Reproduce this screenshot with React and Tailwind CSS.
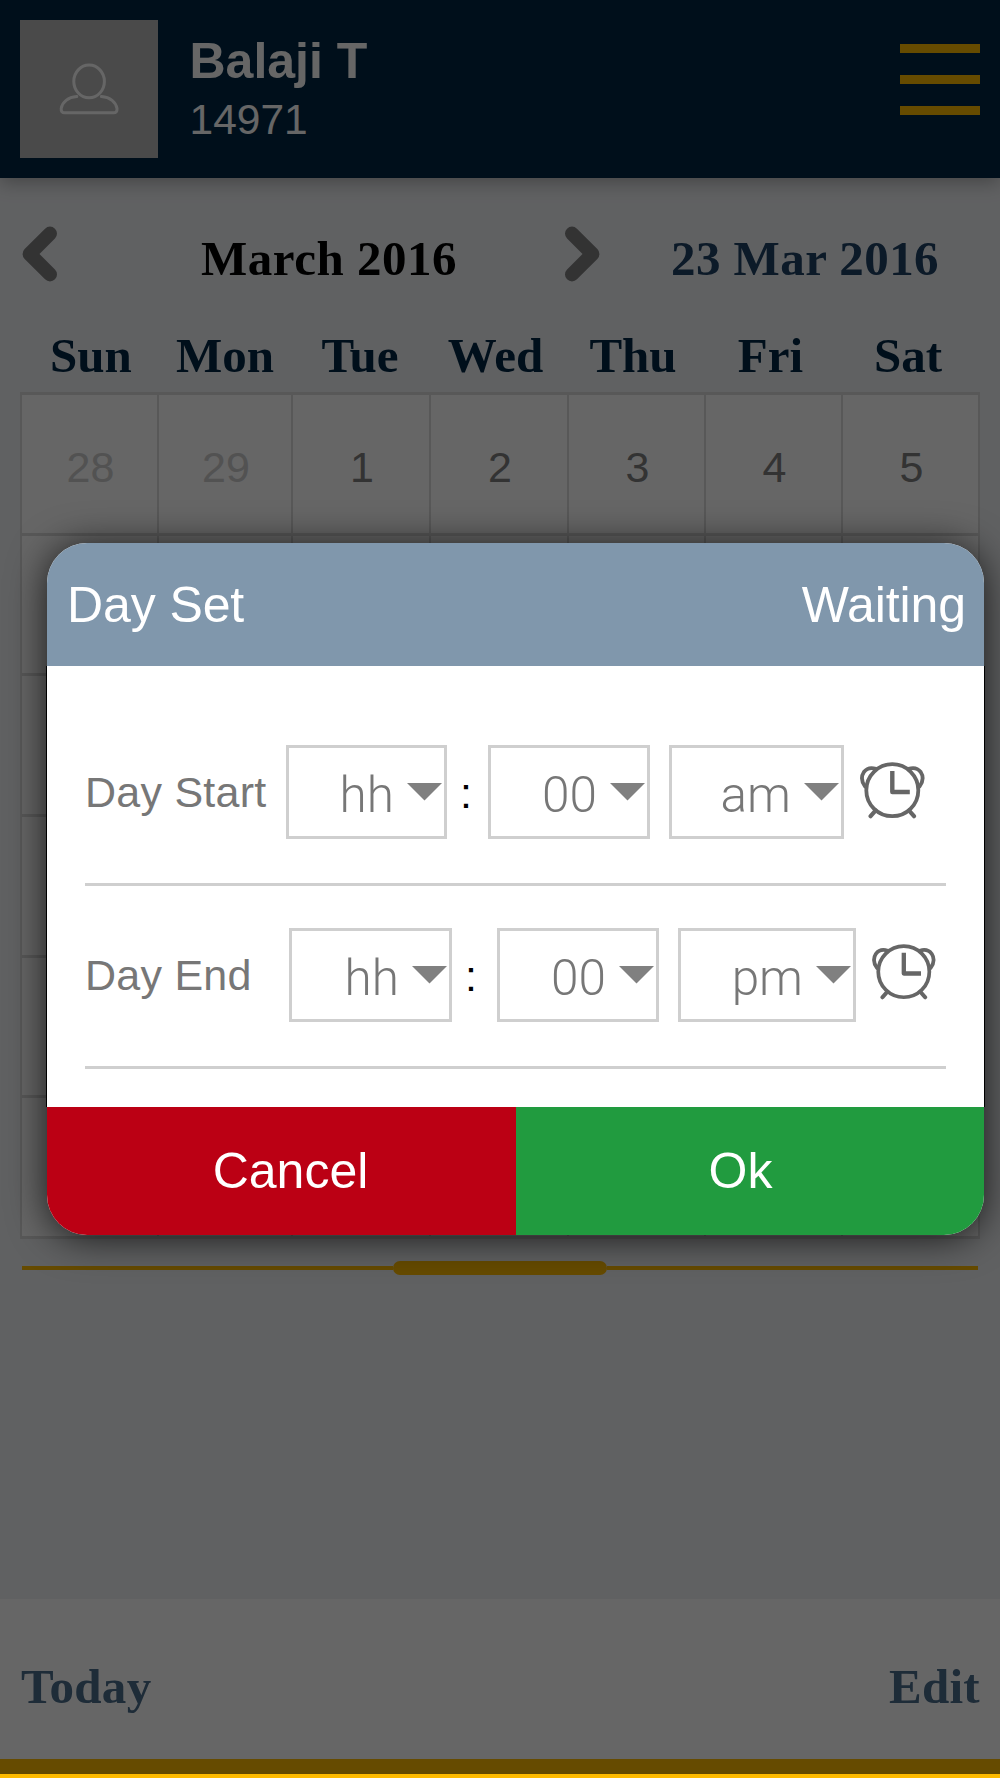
import React from "react";

const SANS = "font-['Liberation_Sans',Arial,sans-serif]";
const SERIF = "font-['Liberation_Serif','Times_New_Roman',serif]";

const WEEKDAYS = ["Sun", "Mon", "Tue", "Wed", "Thu", "Fri", "Sat"];
const FIRST_WEEK = ["28", "29", "1", "2", "3", "4", "5"];

function PersonIcon() {
  return (
    <svg className="h-[52px] w-[60px]" viewBox="0 0 60 52" fill="none" stroke="#fff" strokeWidth="3" strokeLinecap="round" strokeLinejoin="round">
      <ellipse cx="30.1" cy="18.4" rx="15.3" ry="16.3" />
      <path d="M17.8 33.6C9 34.2 3.3 39 2.2 45.5C1.9 48.3 3.3 49.8 5.6 49.8H54.6C56.9 49.8 58.3 48.3 58 45.5C56.9 39 51.2 34.2 42.4 33.6" />
    </svg>
  );
}

function Chevron({ right }) {
  return (
    <svg className="h-[56px] w-[36px] shrink-0" viewBox="0 0 36 56" fill="none" stroke="#808080" strokeWidth="14" strokeLinecap="round" strokeLinejoin="round">
      <path d={right ? "M8 7.6L28.4 28L8 48.4" : "M28 7.6L7.6 28L28 48.4"} />
    </svg>
  );
}

function AlarmIcon({ className }) {
  return (
    <svg className={className} viewBox="0 0 65 57" fill="none" stroke="#666" strokeWidth="3.8" strokeLinecap="round" strokeLinejoin="round">
      <circle cx="32.3" cy="28.2" r="26" />
      <path d="M16 6.8C11.5 5.4 6.6 6.4 3.9 10C1.2 14.2 1.6 19.7 5 24.4" />
      <path d="M48.6 6.8C53.1 5.4 58 6.4 60.7 10C63.4 14.2 63 19.7 59.6 24.4" />
      <path d="M15.5 48.6L10.6 54.2M49.1 48.6L54 54.2" strokeWidth="4.2" />
      <path d="M32.3 9V30H49.8" strokeWidth="4.4" strokeLinecap="butt" />
    </svg>
  );
}

function Select({ value, className }) {
  return (
    <div className={`flex h-[94px] shrink-0 items-center justify-end border-[3px] border-[#cfcfcf] pr-[2px] ${className}`}>
      <span className="mr-[13px] pt-[5px] font-['Roboto',sans-serif] text-[49.5px] leading-[60px] font-light text-[#777]">
        {value}
      </span>
      <svg className="h-[18px] w-[35px]" viewBox="0 0 35 18">
        <path d="M0 0H35L17.5 17.5Z" fill="#808080" />
      </svg>
    </div>
  );
}

export default function App() {
  return (
    <div className={`relative flex h-[1778px] w-[1000px] flex-col overflow-hidden bg-[#f0f2f5] ${SANS}`}>
      <header className="relative flex h-[178px] shrink-0 items-start bg-[#002644] px-5 pt-5 shadow-[0_4px_18px_rgba(0,0,0,0.3)]">
        <div className="flex h-[138px] w-[138px] items-center justify-center bg-[#b9b9b9]">
          <PersonIcon />
        </div>
        <div className="ml-[31.5px] flex-1 text-white">
          <div className="pt-[13px] text-[50px] leading-[56px] font-bold">Balaji T</div>
          <div className="text-[42.5px] leading-[62px]">14971</div>
        </div>
        <div className="mt-[24px] flex w-[80px] flex-col gap-[22px]">
          <span className="h-[9px] bg-[#ffbb00]" />
          <span className="h-[9px] bg-[#ffbb00]" />
          <span className="h-[9px] bg-[#ffbb00]" />
        </div>
      </header>

      <main className="flex h-[1421px] shrink-0 flex-col px-5">
        <div className={`flex h-[152px] items-center pl-[2px] text-[49px] font-bold ${SERIF}`}>
          <Chevron />
          <span className="w-[506px] pt-[10px] pl-[36px] text-center leading-[56px] tracking-[0.5px] text-black">March 2016</span>
          <Chevron right />
          <span className="ml-[71px] pt-[10px] leading-[56px] tracking-[0.45px] whitespace-nowrap text-[#1e4164]">23 Mar 2016</span>
        </div>

        <div className={`-mt-[2px] grid h-[64px] w-[958px] grid-cols-[134px_134px_136px_135px_140px_135px_140px] pl-1 ${SERIF}`}>
          {WEEKDAYS.map((d) => (
            <span key={d} className="text-center text-[49px] leading-[56px] font-bold text-[#002644]">{d}</span>
          ))}
        </div>

        <div className="grid h-[847px] w-[960px] shrink-0 grid-cols-[135px_132px_136px_136px_135px_135px_135px] grid-rows-6 gap-x-[2px] gap-y-[3px] bg-[#dcdcdc] px-[2px] py-[3px]">
          {Array.from({ length: 42 }, (_, i) => (
            <div key={i} className={`flex items-center justify-center bg-white pt-[7px] pl-[2px] text-[43px] leading-[50px] ${i < 2 ? "text-[#ccc]" : "text-[#808080]"}`}>
              {FIRST_WEEK[i]}
            </div>
          ))}
        </div>

        <div className="mt-[22px] ml-[2px] flex h-[14px] w-[956px] items-center">
          <span className="h-1 w-[371px] bg-[#ffbb00]" />
          <span className="h-[14px] w-[214px] rounded-full bg-[#ffbb00]" />
          <span className="h-1 flex-1 bg-[#ffbb00]" />
        </div>
      </main>

      <footer className={`flex h-[160px] shrink-0 items-center justify-between bg-white pr-5 pl-[21px] pt-[16px] text-[49px] leading-[56px] font-bold tracking-[0.3px] text-[#4d6e8c] ${SERIF}`}>
        <span>Today</span>
        <span>Edit</span>
      </footer>
      <div className="h-[19px] shrink-0 bg-[#ffbb00]" />

      <div className="absolute inset-x-0 top-0 h-[1774px] bg-black/60">
        <div className="absolute top-[543px] left-[47px] flex h-[692px] w-[937px] flex-col rounded-[40px] bg-white shadow-[0_3px_38px_rgba(0,0,0,0.75)]">
          <div className="flex h-[123px] shrink-0 items-center justify-between rounded-t-[40px] bg-[#8097ac] pr-[18px] pl-5 text-[50px] leading-[60px] text-white">
            <span className="tracking-[-0.1px]">Day Set</span>
            <span className="tracking-[-0.1px]">Waiting</span>
          </div>

          <div className="flex h-[441px] shrink-0 flex-col bg-white px-[38px] pt-[79px] text-[43px] leading-[50px] text-[#777] shadow-[-1px_0_0_#000,1px_0_0_#000]">
            <div className="flex h-[141px] items-start border-b-[3px] border-[#cfcfcf]">
              <span className="w-[201px] shrink-0 pt-[22px] tracking-[0.25px] whitespace-nowrap">Day Start</span>
              <Select value="hh" className="w-[161px]" />
              <span className="w-[41px] shrink-0 pt-[23px] pl-[13px] text-black">:</span>
              <Select value="00" className="w-[162px]" />
              <Select value="am" className="ml-[19px] w-[175px]" />
              <AlarmIcon className="mt-[17px] ml-4 h-[57px] w-[65px] shrink-0" />
            </div>
            <div className="flex h-[183px] items-start border-b-[3px] border-[#cfcfcf] pt-[42px]">
              <span className="w-[204px] shrink-0 pt-[22px] tracking-[0.25px] whitespace-nowrap">Day End</span>
              <Select value="hh" className="w-[163px]" />
              <span className="w-[45px] shrink-0 pt-[23px] pl-[13px] text-black">:</span>
              <Select value="00" className="w-[162px]" />
              <Select value="pm" className="ml-[19px] w-[178px]" />
              <AlarmIcon className="mt-[16px] ml-4 h-[56px] w-[64px] shrink-0" />
            </div>
          </div>

          <div className="flex flex-1 text-[50px] leading-[60px] text-white">
            <button className="flex w-[469px] items-center justify-center rounded-bl-[40px] bg-[#bb0014] pl-[18px]">Cancel</button>
            <button className="flex flex-1 items-center justify-center rounded-br-[40px] bg-[#219b3f] pr-[19px]">Ok</button>
          </div>
        </div>
      </div>
    </div>
  );
}
